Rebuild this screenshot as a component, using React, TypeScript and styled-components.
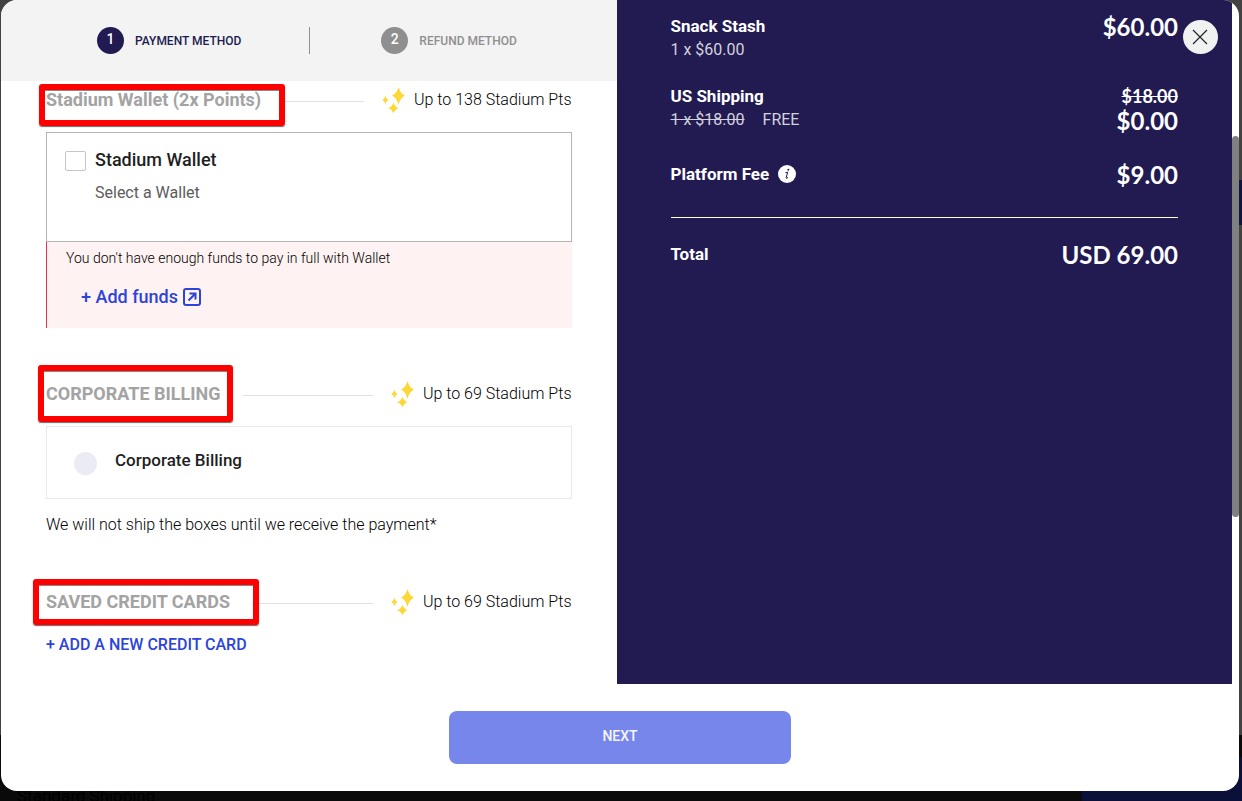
import React from "react";
import styled, { createGlobalStyle } from "styled-components";

const NAVY = "#211b51";
const BLUE = "#2c43dc";

const GlobalStyle = createGlobalStyle`
  *, *::before, *::after { box-sizing: border-box; }
  body {
    margin: 0;
    font-family: Roboto, "Liberation Sans", sans-serif;
    color: #1f1f1f;
  }
  button { font-family: inherit; cursor: pointer; }
  h2, h3, p { margin: 0; }
`;

const Page = styled.div`
  display: flex;
  flex-direction: column;
  min-height: 100vh;
  background:
    linear-gradient(#0a1038, #0a1038) right bottom / 160px 44px no-repeat,
    linear-gradient(#0a0a0a, #0a0a0a) left bottom / 100% 66px no-repeat,
    linear-gradient(#0f1440, #0f1440) right 180px / 3px 45px no-repeat,
    #424242;
`;

const Modal = styled.main`
  position: relative;
  flex: 1;
  display: flex;
  flex-direction: column;
  margin: 0 3px 0 1px;
  border-radius: 16px;
  background: #fff;
  overflow: hidden;
`;

const BehindText = styled.div`
  height: 10px;
  padding-left: 17px;
  font-size: 17px;
  line-height: 10px;
  color: #000;
`;

const Content = styled.div`
  flex: 1;
  display: grid;
  grid-template-columns: minmax(0, 1fr) minmax(0, 1fr) 7px;
`;

const Column = styled.section`
  min-width: 0;
`;

const SummaryColumn = styled(Column)`
  padding: 14px 54px;
  background: ${NAVY};
  color: #fff;
`;

const ScrollTrack = styled.div`
  padding-top: 136px;
`;

const ScrollThumb = styled.div`
  height: 381px;
  border-radius: 4px;
  background: #808080;
`;

const Steps = styled.header`
  display: flex;
  align-items: center;
  height: 81px;
  padding-left: 96px;
  background: #f3f3f3;
`;

const Step = styled.div<{ $active?: boolean }>`
  display: flex;
  align-items: center;
  gap: 11px;
  font-size: 12px;
  font-weight: 500;
  color: ${(p) => (p.$active ? NAVY : "#8f8f8f")};
`;

const StepNumber = styled.span<{ $active?: boolean }>`
  width: 27px;
  height: 27px;
  border-radius: 50%;
  background: ${(p) => (p.$active ? NAVY : "#8f8f8f")};
  color: #fff;
  font-size: 14px;
  line-height: 24px;
  text-align: center;
`;

const StepDivider = styled.span`
  width: 1px;
  height: 27px;
  margin: 0 71px 0 68px;
  background: #8f8f8f;
`;

const Methods = styled.div`
  padding: 0 45px;
`;

const MethodHead = styled.div`
  display: flex;
  align-items: center;
  height: 38px;
  margin-bottom: 13px;
`;

const MethodTitle = styled.h2`
  position: relative;
  font-size: 18px;
  line-height: 24px;
  font-weight: 700;
  color: #a3a3a3;
  white-space: nowrap;
`;

const Highlight = styled.span<{ $top: number; $left: number; $width: number; $height: number }>`
  position: absolute;
  top: ${(p) => p.$top}px;
  left: ${(p) => p.$left}px;
  width: ${(p) => p.$width}px;
  height: ${(p) => p.$height}px;
  border: 6px solid #f00;
  border-radius: 3px;
  box-shadow: 0 1px 1px #666, inset 0 1px 0 #888;
`;

const Rule = styled.span`
  flex: 1;
  height: 1px;
  margin: 2px 18px 0 22px;
  background: #dfe1e4;
`;

const Points = styled.span`
  display: flex;
  align-items: center;
  gap: 8px;
  font-size: 16px;
  line-height: 24px;
  font-weight: 300;
  color: #000;
  white-space: nowrap;
`;

const WalletBox = styled.div`
  display: flex;
  gap: 9px;
  height: 110px;
  padding: 18px;
  border: 1px solid #b4b4b4;
`;

const Checkbox = styled.input`
  appearance: none;
  flex: none;
  width: 21px;
  height: 20px;
  margin: 0;
  border: 1px solid #c6c6c6;
  border-radius: 2px;
  background: #fff;
`;

const WalletText = styled.div`
  display: flex;
  flex-direction: column;
  gap: 14px;
`;

const OptionLabel = styled.label<{ $size?: number }>`
  font-size: ${(p) => p.$size ?? 18}px;
  line-height: 18px;
  font-weight: 500;
`;

const WalletHint = styled.p`
  font-size: 16px;
  line-height: 20px;
  color: #5c5c5c;
`;

const Alert = styled.div`
  height: 86px;
  margin-bottom: 47px;
  padding: 6px 19px;
  border-left: 1px solid #dc3545;
  background: #fef2f2;
`;

const AlertText = styled.p`
  font-size: 14px;
  line-height: 20px;
  font-weight: 300;
  color: #000;
`;

const AddFunds = styled.button`
  display: flex;
  align-items: center;
  gap: 4px;
  margin: 18px 0 0 15px;
  padding: 0;
  border: 0;
  background: none;
  color: ${BLUE};
  font-size: 18px;
  line-height: 22px;
  font-weight: 500;
`;

const BillingBox = styled.div`
  display: flex;
  gap: 18px;
  height: 73px;
  margin-bottom: 16px;
  padding: 24px 27px;
  border: 1px solid #e9e9e9;
`;

const Radio = styled.input`
  appearance: none;
  flex: none;
  width: 23px;
  height: 23px;
  margin: 1px 0 0;
  border-radius: 50%;
  background: #ebebf4;
`;

const Note = styled.p`
  margin-bottom: 48px;
  font-size: 16px;
  line-height: 20px;
  font-weight: 300;
  color: #000;
`;

const AddCard = styled.button`
  padding: 0;
  border: 0;
  background: none;
  color: ${BLUE};
  font-size: 16px;
  line-height: 22px;
  font-weight: 500;
`;

const Line = styled.div<{ $gap: number }>`
  display: flex;
  justify-content: space-between;
  align-items: flex-start;
  margin-bottom: ${(p) => p.$gap}px;
`;

const ItemName = styled.h3`
  display: flex;
  align-items: center;
  gap: 9px;
  font-size: 17px;
  line-height: 24px;
  font-weight: 700;
`;

const ItemDetail = styled.p`
  display: flex;
  gap: 18px;
  font-size: 16px;
  line-height: 24px;
  color: #d3d1dc;
`;

const Amounts = styled.div`
  display: flex;
  flex-direction: column;
  align-items: flex-end;
  font-family: Lato, Roboto, sans-serif;
  font-weight: 700;
`;

const Amount = styled.span`
  font-size: 24px;
  line-height: 26px;
`;

const OldAmount = styled.s`
  font-size: 18px;
  line-height: 24px;
`;

const TotalRule = styled.hr`
  height: 1px;
  margin: 0 0 24px;
  border: 0;
  background: #fff;
`;

const Close = styled.button`
  position: absolute;
  top: 20px;
  right: 21px;
  display: grid;
  place-items: center;
  width: 35px;
  height: 34px;
  padding: 0;
  border: 0;
  border-radius: 50%;
  background: #f0f2f2;
`;

const Footer = styled.footer`
  display: flex;
  justify-content: center;
  padding: 27px 0;
`;

const Next = styled.button`
  width: 342px;
  height: 53px;
  padding: 0 0 4px;
  border: 0;
  border-radius: 8px;
  background: #7786ea;
  color: #f4f5fe;
  font-size: 14px;
  font-weight: 500;
`;

const Sparkles = () => (
  <svg width="24" height="28" viewBox="0 0 24 28" fill="#fdd835" aria-hidden="true">
    <path d="M16.500 1C17.800 5.500 19.500 8.200 23 9.500C19.500 11.500 17.800 14 16.500 19C15.200 14 13.500 11.500 10 9.500C13.500 8.200 15.200 5.500 16.500 1Z" />
    <path d="M3.500 9.500C4.200 12 5 13.200 6.500 14C5 14.800 4.200 16 3.500 18.500C2.800 16 2 14.800 0 14C2 13.200 2.800 12 3.500 9.500Z" />
    <path d="M11.500 17C12.800 19.800 14 21.300 16.500 22.300C14 23.300 12.800 24.500 11.500 27.300C10.200 24.500 9 23.300 6 22.300C9 21.300 10.200 19.800 11.500 17Z" />
  </svg>
);

const ExternalIcon = () => (
  <svg width="20" height="20" viewBox="0 0 20 20" fill="none" stroke={BLUE} strokeWidth="2" aria-hidden="true">
    <rect x="2" y="2" width="16" height="16" rx="2" />
    <path d="M6.500 13.500L13 7M7.500 6.500H13.500V12.500" />
  </svg>
);

const InfoIcon = () => (
  <svg width="18" height="18" viewBox="0 0 18 18" aria-hidden="true">
    <circle cx="9" cy="9" r="9" fill="#fff" />
    <circle cx="10.300" cy="4.800" r="1" fill={NAVY} />
    <path d="M7.400 7.700L9.700 7.200L8.100 12.800Q7.900 14.200 10 12.300" fill="none" stroke={NAVY} strokeWidth="1" />
  </svg>
);

type HeadProps = { title: string; points: number; box: [number, number, number, number] };

const Head = ({ title, points, box }: HeadProps) => (
  <MethodHead>
    <MethodTitle>
      {title}
      <Highlight $left={box[0]} $top={box[1]} $width={box[2]} $height={box[3]} />
    </MethodTitle>
    <Rule />
    <Points>
      <Sparkles />
      Up to {points} Stadium Pts
    </Points>
  </MethodHead>
);

export default function App() {
  return (
    <Page>
      <GlobalStyle />
      <Modal>
        <Content>
          <Column>
            <Steps>
              <Step $active>
                <StepNumber $active>1</StepNumber>
                PAYMENT METHOD
              </Step>
              <StepDivider />
              <Step>
                <StepNumber>2</StepNumber>
                REFUND METHOD
              </Step>
            </Steps>
            <Methods>
              <Head title="Stadium Wallet (2x Points)" points={138} box={[-7, -4, 246, 42]} />
              <WalletBox>
                <Checkbox type="checkbox" id="wallet" />
                <WalletText>
                  <OptionLabel htmlFor="wallet">Stadium Wallet</OptionLabel>
                  <WalletHint>Select a Wallet</WalletHint>
                </WalletText>
              </WalletBox>
              <Alert>
                <AlertText>You don't have enough funds to pay in full with Wallet</AlertText>
                <AddFunds type="button">
                  + Add funds
                  <ExternalIcon />
                </AddFunds>
              </Alert>

              <Head title="CORPORATE BILLING" points={69} box={[-8, -17, 195, 57]} />
              <BillingBox>
                <Radio type="radio" id="billing" name="method" />
                <OptionLabel htmlFor="billing" $size={17}>Corporate Billing</OptionLabel>
              </BillingBox>
              <Note>We will not ship the boxes until we receive the payment*</Note>

              <Head title="SAVED CREDIT CARDS" points={69} box={[-13, -11, 226, 46]} />
              <AddCard type="button">+ ADD A NEW CREDIT CARD</AddCard>
            </Methods>
          </Column>

          <SummaryColumn>
            <Line $gap={22}>
              <div>
                <ItemName>Snack Stash</ItemName>
                <ItemDetail>1 x $60.00</ItemDetail>
              </div>
              <Amounts>
                <Amount>$60.00</Amount>
              </Amounts>
            </Line>
            <Line $gap={28}>
              <div>
                <ItemName>US Shipping</ItemName>
                <ItemDetail>
                  <s>1 x $18.00</s>
                  <span>FREE</span>
                </ItemDetail>
              </div>
              <Amounts>
                <OldAmount>$18.00</OldAmount>
                <Amount>$0.00</Amount>
              </Amounts>
            </Line>
            <Line $gap={29}>
              <ItemName>
                Platform Fee
                <InfoIcon />
              </ItemName>
              <Amounts>
                <Amount>$9.00</Amount>
              </Amounts>
            </Line>
            <TotalRule />
            <Line $gap={0}>
              <ItemName>Total</ItemName>
              <Amounts>
                <Amount>USD 69.00</Amount>
              </Amounts>
            </Line>
          </SummaryColumn>

          <ScrollTrack>
            <ScrollThumb />
          </ScrollTrack>
        </Content>
        <Footer>
          <Next type="button">NEXT</Next>
        </Footer>
        <Close type="button" aria-label="Close">
          <svg width="17" height="16" viewBox="0 0 17 16" stroke="#222" strokeWidth="1.200" aria-hidden="true">
            <path d="M1 1L15 15M15 1L1 15" />
          </svg>
        </Close>
      </Modal>
      <BehindText>Standard Shipping</BehindText>
    </Page>
  );
}
